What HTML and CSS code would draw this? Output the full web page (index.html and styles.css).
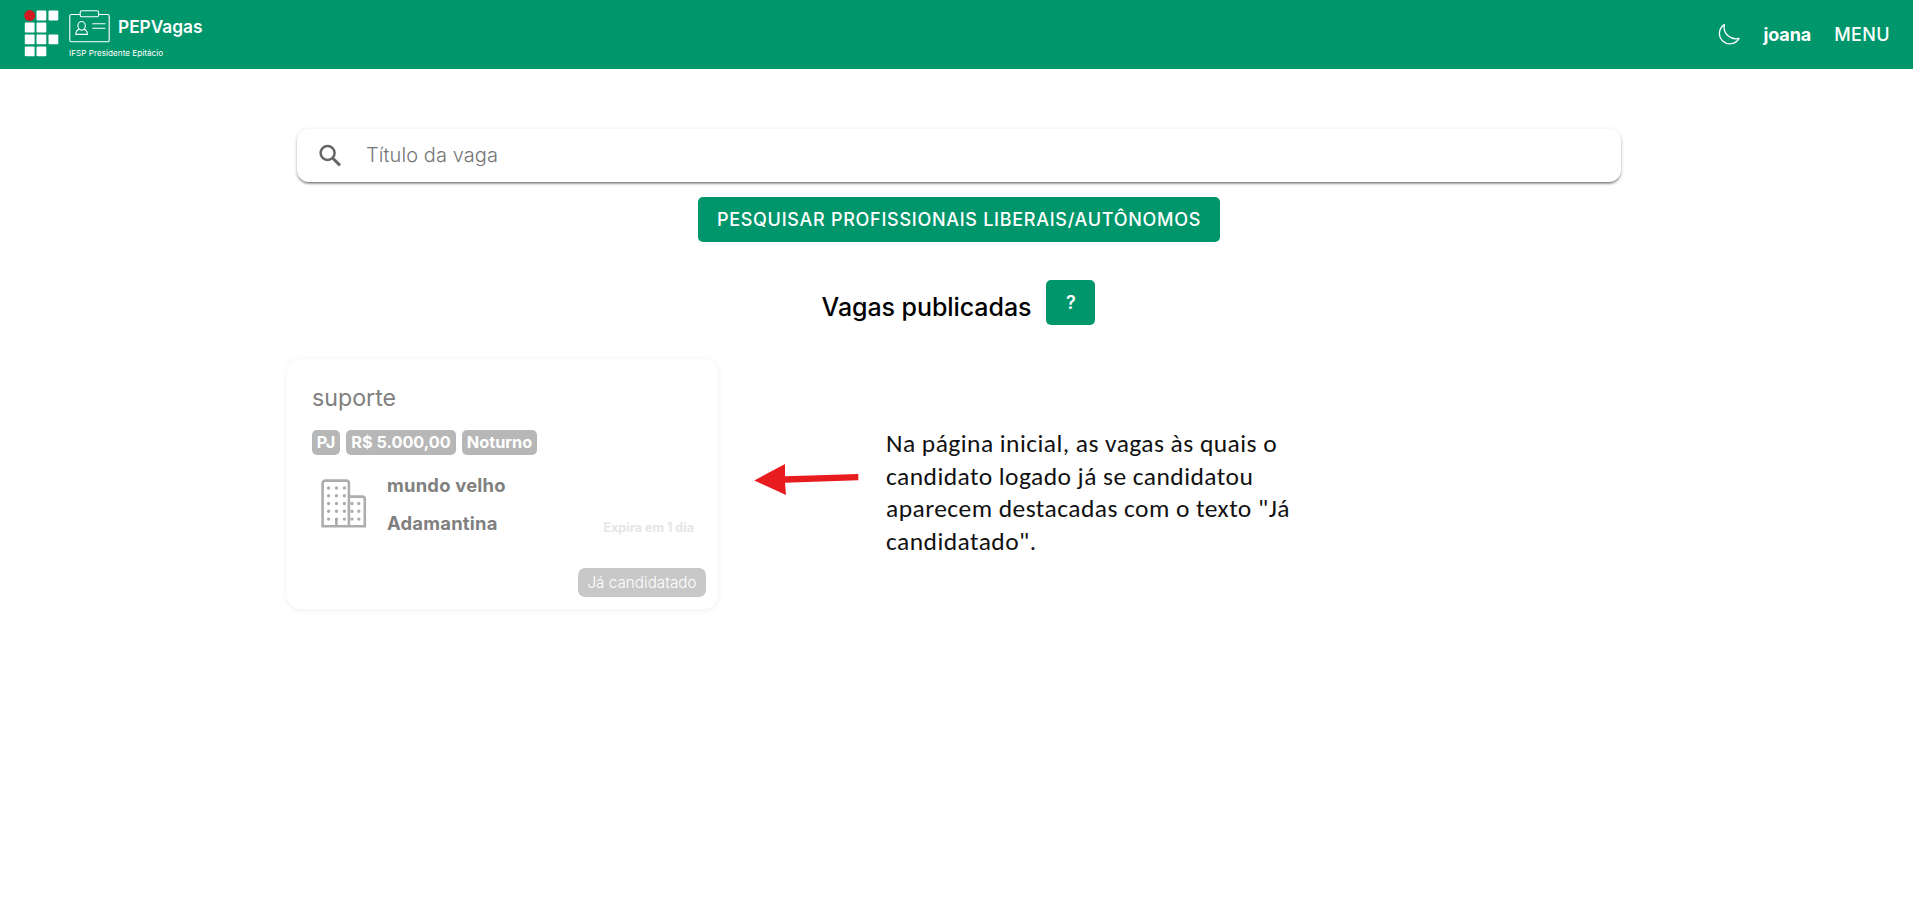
FILE: index.html
```html
<!DOCTYPE html>
<html lang="pt-BR">
<head>
<meta charset="utf-8">
<title>PEPVagas</title>
<link rel="stylesheet" href="styles.css">
</head>
<body>
<header class="topbar">
  <a class="brand">
    <svg class="brand-if" width="36" height="48" viewBox="0 0 36 48">
      <circle cx="5.7" cy="5.6" r="5.5" fill="#cf1a20"/>
      <g fill="#fff">
        <rect x="12.5" y="0.6" width="9.8" height="9.8" rx="1"/><rect x="24.5" y="0.6" width="9.8" height="9.8" rx="1"/>
        <rect x="0.8" y="12.6" width="9.8" height="9.8" rx="1"/><rect x="12.5" y="12.6" width="9.8" height="9.8" rx="1"/>
        <rect x="0.8" y="24.5" width="9.8" height="9.8" rx="1"/><rect x="12.5" y="24.5" width="9.8" height="9.8" rx="1"/><rect x="24.5" y="24.5" width="9.8" height="9.8" rx="1"/>
        <rect x="0.8" y="36.4" width="9.8" height="9.8" rx="1"/><rect x="12.5" y="36.4" width="9.8" height="9.8" rx="1"/>
      </g>
    </svg>
    <span class="brand-info">
      <span class="brand-row">
        <svg width="42" height="33" viewBox="0 0 42 33" fill="none" stroke="#fff" stroke-width="1.1">
          <path d="M11 4.5H2.2a1.4 1.4 0 0 0-1.4 1.4v24.4a1.4 1.4 0 0 0 1.4 1.4h36.6a1.4 1.4 0 0 0 1.4-1.4V5.900a1.400 1.400 0 0 0-1.400-1.400H30"/>
          <rect x="11.200" y="0.800" width="18.400" height="6" rx="1.500"/>
          <ellipse cx="12.600" cy="15.800" rx="3.700" ry="4.300"/>
          <path d="M10.200 19.200c-2.200.8-3.400 2.600-3.400 5.200h11.600c0-2.600-1.200-4.400-3.400-5.200M23.300 13.800h13.200M23.300 18.300h13.200"/>
        </svg>
        <span class="brand-name">PEPVagas</span>
      </span>
      <span class="brand-campus">IFSP Presidente Epitácio</span>
    </span>
  </a>
  <nav class="topnav">
    <svg width="24" height="24" viewBox="0 0 24 24" fill="none" stroke="#fff" stroke-width="1.300" stroke-linejoin="round"><path d="M7.400 1.600A10.400 10.400 0 1 0 22 15.400C14 17.500 5.500 11 7.400 1.600Z"/></svg>
    <span class="user">joana</span>
    <span class="menu">MENU</span>
  </nav>
</header>
<main class="page">
  <label class="search">
    <svg width="23" height="23" viewBox="0 0 23 23" fill="none" stroke="#666" stroke-width="2.500"><circle cx="8.600" cy="9" r="7"/><path d="M13.800 14.200L21 21.400" stroke-width="3"/></svg>
    <input class="search-input" type="text" placeholder="Título da vaga">
  </label>
  <button class="btn btn-wide">PESQUISAR PROFISSIONAIS LIBERAIS/AUTÔNOMOS</button>
  <div class="heading">
    <h1 class="heading-title">Vagas publicadas</h1>
    <button class="btn btn-help">?</button>
  </div>
  <section class="jobs">
    <article class="card">
      <h2 class="card-title">suporte</h2>
      <div class="tags"><span class="tag tag-contract">PJ</span><span class="tag tag-pay">R$ 5.000,00</span><span class="tag tag-shift">Noturno</span></div>
      <div class="company">
        <svg class="company-icon" width="46" height="50" viewBox="0 0 46 50" fill="none" stroke="#adadad" stroke-width="2.600">
          <path d="M1.600 47.200V4.200a2.600 2.600 0 0 1 2.600-2.600H25.300a2.600 2.600 0 0 1 2.600 2.600V47.200ZM27.900 17.600H41.200a2.600 2.600 0 0 1 2.600 2.600V47.200H27.900M15.400 47V40"/>
          <path d="M7.600 9H24M7.600 16.700H24M7.600 24.500H24M7.600 32.300H24M7.600 40.100H24" stroke-width="3.400" stroke-linecap="round" stroke-dasharray="0 7.900"/>
          <path d="M31 24.500H38.500M31 32.300H38.500M31 40.100H38.500" stroke-width="3.400" stroke-linecap="round" stroke-dasharray="0 6.800"/>
        </svg>
        <div class="company-text"><span class="company-name">mundo velho</span><span class="company-city">Adamantina</span></div>
        <span class="expires">Expira em 1 dia</span>
      </div>
      <span class="applied">Já candidatado</span>
    </article>
    <aside class="note">
      <svg class="arrow" width="106" height="32" viewBox="0 0 106 32"><path d="M0.300 16.500L31 0V12.300L104.300 10V16.300L31 18.800L32 31Z" fill="#e81b1e"/></svg>
      <p class="note-text"><span class="line">Na página inicial, as vagas às quais o</span><span class="line">candidato logado já se candidatou</span><span class="line">aparecem destacadas com o texto "Já</span><span class="line">candidatado".</span></p>
    </aside>
  </section>
</main>
</body>
</html>
```
FILE: styles.css
```css
* { box-sizing: border-box; }
body { margin: 0; background: #fff; color: #000; font-family: Inter, "Liberation Sans", sans-serif; }
.topbar { height: 69px; background: #00966c; color: #fff; display: flex; justify-content: space-between; padding: 0 23px 0 24px; }
.brand { display: flex; padding-top: 10px; gap: 9px; }
.brand-if, .company-icon, .arrow { flex: none; }
.brand-info { display: flex; flex-direction: column; gap: 5px; }
.brand-row { display: flex; gap: 7px; height: 33px; }
.brand-name { font-size: 17.300px; font-weight: 600; line-height: 34px; }
.brand-campus { font-size: 8.200px; line-height: 10px; white-space: nowrap; }
.topnav { display: flex; align-items: center; }
.user { margin-left: 22px; font-size: 18px; font-weight: 700; letter-spacing: -.1px; }
.menu { margin-left: 23px; font-size: 18px; font-weight: 450; letter-spacing: .4px; }
.page { display: flex; flex-direction: column; align-items: center; padding-top: 60px; padding-left: 5px; }
.search { width: 1324px; height: 53px; border-radius: 12px; background: #fff; display: flex; align-items: center; padding-left: 22px; gap: 24px; box-shadow: 0 3px 1px -2px rgba(0,0,0,.2), 0 2px 2px rgba(0,0,0,.3), 0 1px 5px rgba(0,0,0,.12); }
.search-input { border: 0; outline: 0; background: none; flex: 1; padding: 0 0 2px; font: 300 20px Inter, sans-serif; letter-spacing: .08px; }
.search-input::placeholder { color: #757575; }
.btn { height: 45px; border: 0; border-radius: 5px; background: #00966c; color: #fff; font-family: Inter, sans-serif; padding: 0; white-space: nowrap; }
.btn-wide { width: 522px; margin-top: 15px; font-size: 18px; font-weight: 500; letter-spacing: .72px; }
.heading { display: flex; margin-top: 38px; margin-right: 1px; gap: 15px; }
.heading-title { margin: 5px 0 0; font-size: 25px; font-weight: 450; line-height: 45px; letter-spacing: -.07px; }
.btn-help { width: 49px; font-size: 18px; font-weight: 600; }
.jobs { width: 1344px; margin-top: 29px; padding-bottom: 10px; display: flex; }
.card { width: 431px; height: 250px; border-radius: 14px; padding: 23px 12px 12px 25px; box-shadow: 0 1px 6px rgba(0,0,0,.07); display: flex; flex-direction: column; color: #808080; }
.card-title { margin: 0; font-size: 23.200px; line-height: 32px; font-weight: 400; }
.tags { display: flex; gap: 6px; margin-top: 16px; }
.tag { height: 25px; border-radius: 5px; background: #b7b7b7; color: #fff; font-weight: 750; font-size: 16.300px; line-height: 25px; text-align: center; white-space: nowrap; }
.tag-contract { width: 28px; }
.tag-pay { width: 110px; }
.tag-shift { width: 75px; }
.company { display: flex; margin-top: 17px; height: 76px; padding-right: 12px; }
.company-icon { margin: 7px 20px 0 9px; }
.company-text { display: flex; flex-direction: column; font-size: 18.400px; font-weight: 700; letter-spacing: .22px; line-height: 38px; flex: 1; margin-top: -6px; }
.expires { align-self: flex-end; font-size: 12.600px; font-weight: 700; line-height: 16px; color: #e6e6e6; margin-bottom: 12px; }
.applied { align-self: flex-end; margin-top: auto; width: 128px; height: 29px; border-radius: 7px; background: #c8c8c8; color: #fff; font-size: 15.300px; font-weight: 350; line-height: 29px; text-align: center; white-space: nowrap; }
.note { display: flex; align-items: flex-start; margin-left: 36px; }
.arrow { margin-top: 105px; }
.note-text { margin: 69px 0 0 26px; font-family: Carlito, Calibri, "Noto Sans", sans-serif; font-size: 25.500px; letter-spacing: .45px; line-height: 32.500px; color: #111; }
.line { display: block; white-space: nowrap; }
```
